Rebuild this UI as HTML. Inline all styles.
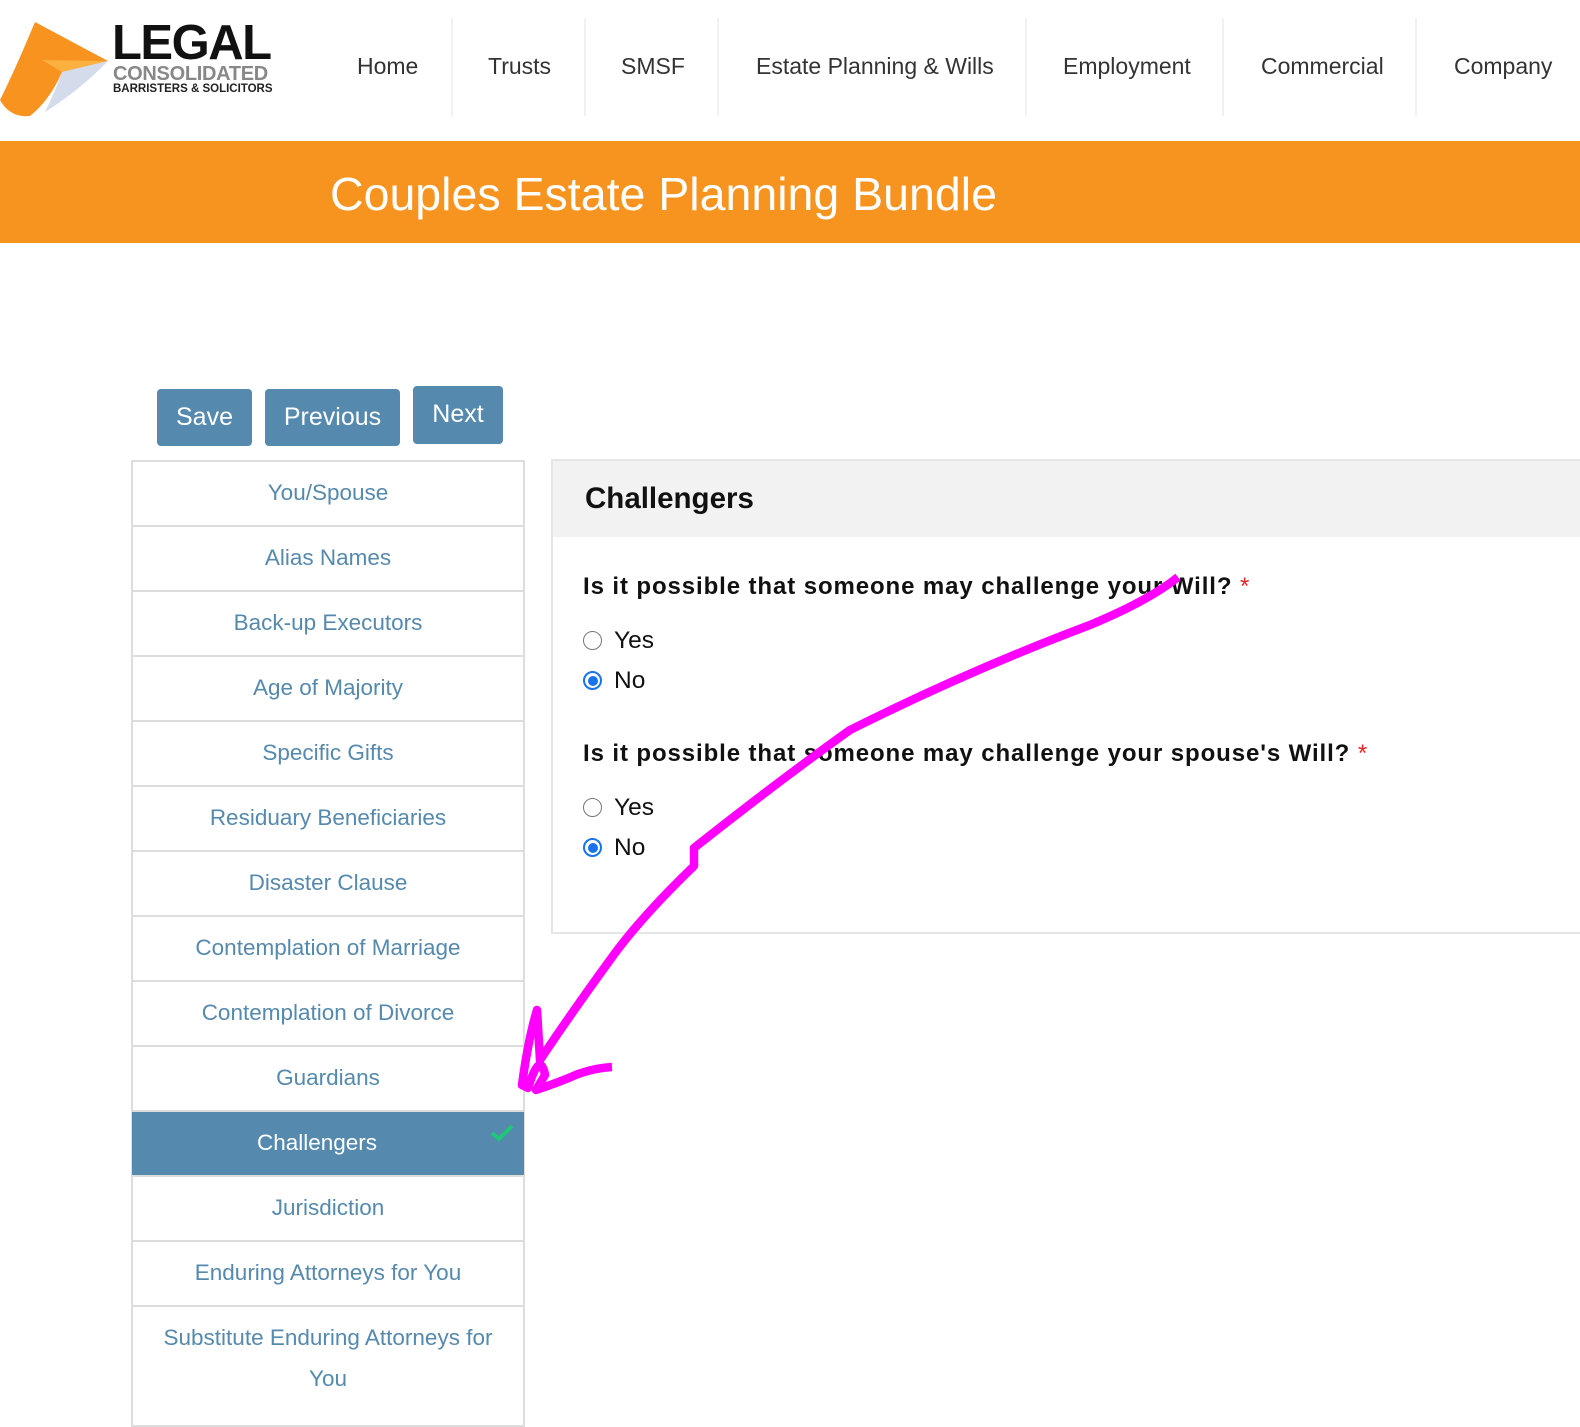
<!DOCTYPE html>
<html><head><meta charset="utf-8">
<style>
*{box-sizing:border-box;margin:0;padding:0}
body{width:1580px;height:1416px;overflow:hidden;background:#fff;font-family:"Liberation Sans",Arial,sans-serif;position:relative}
.abs{position:absolute}
.nav{position:absolute;top:53px;font-size:23px;color:#333}
.sep{position:absolute;top:18px;width:2px;height:98px;background:#f1f1f1}
.btn{position:absolute;background:#5589ad;color:#fff;font-size:25px;border-radius:4px;text-align:center}
.side{position:absolute;left:131px;width:394px;border:2px solid #ddd;border-top:none}
.item{height:65px;border-top:2px solid #ddd;color:#5589ad;font-size:22.5px;text-align:center;line-height:62px}
.item.act{background:#5589ad;color:#fff;position:relative;margin:0 -1px}
.q{position:absolute;left:583px;font-size:24px;font-weight:bold;color:#111;letter-spacing:0.9px;white-space:nowrap}
.q span{color:#e22;font-weight:normal}
.r{position:absolute;left:583px;font-size:24.5px;color:#111}
.rb{position:absolute;left:0;top:4px;width:19px;height:19px;border-radius:50%;border:1.5px solid #767676;background:#fff}
.rb.on{border:2px solid #1a73e8}
.rb.on::after{content:"";position:absolute;left:2.5px;top:2.5px;width:10px;height:10px;border-radius:50%;background:#1a73e8}
</style></head><body>
<svg class="abs" style="left:0;top:20px" width="110" height="98" viewBox="0 0 110 98">
<path d="M35 2 L108 41 L62 52 Q50 80 30 96 Q10 98 0 80 Q15 50 35 2Z" fill="#f7931e"/>
<path d="M42 40 L108 41 L62 52Z" fill="#fbb040"/>
<path d="M108 41 L62 52 Q55 72 45 92 Q80 70 108 41Z" fill="#d4dceb"/>
</svg>
<div class="abs" style="left:112px;top:15px;font-size:49px;font-weight:bold;color:#111;letter-spacing:-1.5px">LEGAL</div>
<div class="abs" style="left:113px;top:63px;font-size:20px;font-weight:bold;color:#888;letter-spacing:-0.3px">CONSOLIDATED</div>
<div class="abs" style="left:113px;top:83px;font-size:11.5px;font-weight:bold;color:#222">BARRISTERS &amp; SOLICITORS</div>

<div class="nav" style="left:357px">Home</div>
<div class="sep" style="left:451px"></div>
<div class="nav" style="left:488px">Trusts</div>
<div class="sep" style="left:584px"></div>
<div class="nav" style="left:621px">SMSF</div>
<div class="sep" style="left:717px"></div>
<div class="nav" style="left:756px">Estate Planning &amp; Wills</div>
<div class="sep" style="left:1025px"></div>
<div class="nav" style="left:1063px">Employment</div>
<div class="sep" style="left:1222px"></div>
<div class="nav" style="left:1261px">Commercial</div>
<div class="sep" style="left:1415px"></div>
<div class="nav" style="left:1454px">Company</div>

<div class="abs" style="left:0;top:141px;width:1580px;height:102px;background:#f7941f"></div>
<div class="abs" style="left:330px;top:167px;font-size:46.5px;color:#fff">Couples Estate Planning Bundle</div>

<div class="btn" style="left:157px;top:389px;width:95px;height:57px;line-height:57px">Save</div>
<div class="btn" style="left:265px;top:389px;width:135px;height:57px;line-height:57px">Previous</div>
<div class="btn" style="left:413px;top:386px;width:90px;height:58px;line-height:56px">Next</div>

<div class="side" style="top:460px">
<div class="item">You/Spouse</div>
<div class="item">Alias Names</div>
<div class="item">Back-up Executors</div>
<div class="item">Age of Majority</div>
<div class="item">Specific Gifts</div>
<div class="item">Residuary Beneficiaries</div>
<div class="item">Disaster Clause</div>
<div class="item">Contemplation of Marriage</div>
<div class="item">Contemplation of Divorce</div>
<div class="item">Guardians</div>
<div class="item act" style="padding-right:22px">Challengers<svg style="position:absolute;right:10px;top:12px" width="24" height="18" viewBox="0 0 24 18"><path d="M2 9 L9 15 L22 2" stroke="#1fc77a" stroke-width="4" fill="none"/></svg></div>
<div class="item">Jurisdiction</div>
<div class="item">Enduring Attorneys for You</div>
<div class="item" style="height:120px;line-height:41px;padding:10px 24px 0">Substitute Enduring Attorneys for You</div>
</div>

<div class="abs" style="left:551px;top:459px;width:1040px;height:475px;border:2px solid #e6e6e6"></div>
<div class="abs" style="left:553px;top:461px;width:1030px;height:76px;background:#f2f2f2"></div>
<div class="abs" style="left:585px;top:482px;font-size:29.5px;font-weight:bold;color:#111">Challengers</div>

<div class="q" style="top:573px">Is it possible that someone may challenge your Will? <span>*</span></div>
<div class="r" style="top:627px"><i class="rb"></i><span style="margin-left:31px">Yes</span></div>
<div class="r" style="top:667px"><i class="rb on"></i><span style="margin-left:31px">No</span></div>
<div class="q" style="top:740px">Is it possible that someone may challenge your spouse's Will? <span>*</span></div>
<div class="r" style="top:794px"><i class="rb"></i><span style="margin-left:31px">Yes</span></div>
<div class="r" style="top:834px"><i class="rb on"></i><span style="margin-left:31px">No</span></div>

<svg class="abs" style="left:0;top:0" width="1580" height="1416">
<path d="M1178 577 Q1150 600 1090 625 Q970 670 850 730 Q780 780 694 848 L694 866 Q640 918 610 960 Q570 1015 540 1060 L537 1010 Q528 1040 522 1085 L528 1088 Q540 1050 545 1075 Q542 1080 536 1090 Q560 1082 578 1074 Q595 1068 612 1067" stroke="#ff00ff" stroke-width="8.5" fill="none" stroke-linejoin="round"/>
</svg>
</body></html>
